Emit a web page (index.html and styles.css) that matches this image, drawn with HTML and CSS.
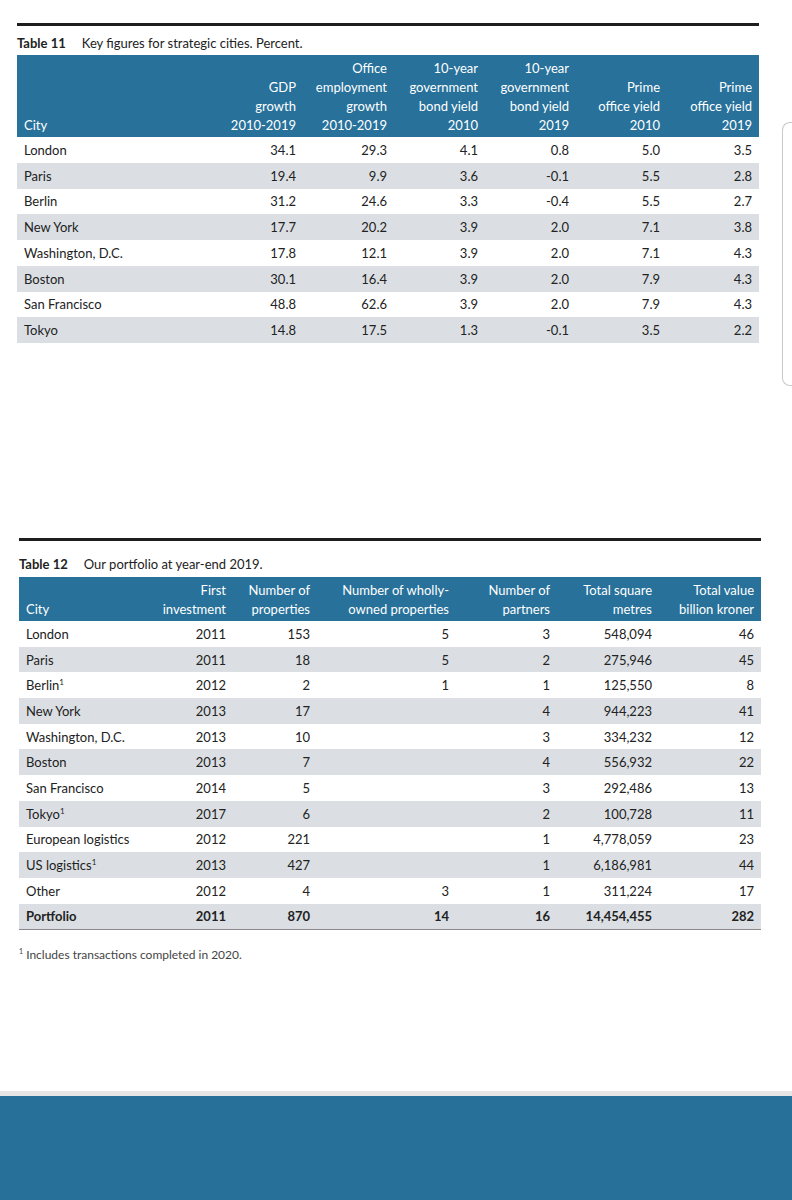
FILE: index.html
```html
<!DOCTYPE html>
<html lang="en">
<head>
<meta charset="utf-8">
<title>Key figures for strategic cities</title>
<link rel="stylesheet" href="styles.css">
</head>
<body>
<div class="page">
  <section class="block block-11">
    <div class="rule"></div>
    <p class="caption"><b>Table 11</b><span>Key figures for strategic cities. Percent.</span></p>
    <table class="data t11">
      <colgroup>
        <col class="c-city"><col class="c-num"><col class="c-num"><col class="c-num"><col class="c-num"><col class="c-num"><col class="c-last">
      </colgroup>
      <thead>
        <tr>
          <th class="l">City</th>
          <th>GDP<br>growth<br>2010-2019</th>
          <th>Office<br>employment<br>growth<br>2010-2019</th>
          <th>10-year<br>government<br>bond yield<br>2010</th>
          <th>10-year<br>government<br>bond yield<br>2019</th>
          <th>Prime<br>office yield<br>2010</th>
          <th>Prime<br>office yield<br>2019</th>
        </tr>
      </thead>
      <tbody>
        <tr><td class="l">London</td><td>34.1</td><td>29.3</td><td>4.1</td><td>0.8</td><td>5.0</td><td>3.5</td></tr>
        <tr><td class="l">Paris</td><td>19.4</td><td>9.9</td><td>3.6</td><td>-0.1</td><td>5.5</td><td>2.8</td></tr>
        <tr><td class="l">Berlin</td><td>31.2</td><td>24.6</td><td>3.3</td><td>-0.4</td><td>5.5</td><td>2.7</td></tr>
        <tr><td class="l">New York</td><td>17.7</td><td>20.2</td><td>3.9</td><td>2.0</td><td>7.1</td><td>3.8</td></tr>
        <tr><td class="l">Washington, D.C.</td><td>17.8</td><td>12.1</td><td>3.9</td><td>2.0</td><td>7.1</td><td>4.3</td></tr>
        <tr><td class="l">Boston</td><td>30.1</td><td>16.4</td><td>3.9</td><td>2.0</td><td>7.9</td><td>4.3</td></tr>
        <tr><td class="l">San Francisco</td><td>48.8</td><td>62.6</td><td>3.9</td><td>2.0</td><td>7.9</td><td>4.3</td></tr>
        <tr><td class="l">Tokyo</td><td>14.8</td><td>17.5</td><td>1.3</td><td>-0.1</td><td>3.5</td><td>2.2</td></tr>
      </tbody>
    </table>
  </section>

  <section class="block block-12">
    <div class="rule"></div>
    <p class="caption"><b>Table 12</b><span>Our portfolio at year-end 2019.</span></p>
    <table class="data t12">
      <colgroup>
        <col class="d-city"><col class="d-first"><col class="d-props"><col class="d-wholly"><col class="d-partners"><col class="d-sqm"><col class="d-value">
      </colgroup>
      <thead>
        <tr>
          <th class="l">City</th>
          <th>First<br>investment</th>
          <th>Number of<br>properties</th>
          <th>Number of wholly-<br>owned properties</th>
          <th>Number of<br>partners</th>
          <th>Total square<br>metres</th>
          <th>Total value<br>billion kroner</th>
        </tr>
      </thead>
      <tbody>
        <tr><td class="l">London</td><td>2011</td><td>153</td><td>5</td><td>3</td><td>548,094</td><td>46</td></tr>
        <tr><td class="l">Paris</td><td>2011</td><td>18</td><td>5</td><td>2</td><td>275,946</td><td>45</td></tr>
        <tr><td class="l">Berlin<sup>1</sup></td><td>2012</td><td>2</td><td>1</td><td>1</td><td>125,550</td><td>8</td></tr>
        <tr><td class="l">New York</td><td>2013</td><td>17</td><td></td><td>4</td><td>944,223</td><td>41</td></tr>
        <tr><td class="l">Washington, D.C.</td><td>2013</td><td>10</td><td></td><td>3</td><td>334,232</td><td>12</td></tr>
        <tr><td class="l">Boston</td><td>2013</td><td>7</td><td></td><td>4</td><td>556,932</td><td>22</td></tr>
        <tr><td class="l">San Francisco</td><td>2014</td><td>5</td><td></td><td>3</td><td>292,486</td><td>13</td></tr>
        <tr><td class="l">Tokyo<sup>1</sup></td><td>2017</td><td>6</td><td></td><td>2</td><td>100,728</td><td>11</td></tr>
        <tr><td class="l">European logistics</td><td>2012</td><td>221</td><td></td><td>1</td><td>4,778,059</td><td>23</td></tr>
        <tr><td class="l">US logistics<sup>1</sup></td><td>2013</td><td>427</td><td></td><td>1</td><td>6,186,981</td><td>44</td></tr>
        <tr><td class="l">Other</td><td>2012</td><td>4</td><td>3</td><td>1</td><td>311,224</td><td>17</td></tr>
        <tr class="total"><td class="l">Portfolio</td><td>2011</td><td>870</td><td>14</td><td>16</td><td>14,454,455</td><td>282</td></tr>
      </tbody>
    </table>
    <p class="footnote"><sup>1</sup> Includes transactions completed in 2020.</p>
  </section>
</div>
<footer class="band"></footer>
<div class="side-tab"></div>
</body>
</html>
```

FILE: styles.css
```css
html, body {
  margin: 0;
  padding: 0;
  background: #ffffff;
  overflow: hidden;
}

body {
  font-family: Lato, "Open Sans", "Liberation Sans", sans-serif;
  font-size: 13px;
  color: #222222;
  width: 792px;
  height: 1200px;
  position: relative;
}

.page {
  height: 1091px;
}

.block {
  width: 742px;
}

.block-11 {
  padding-top: 23px;
  margin-left: 17px;
}

.block-12 {
  padding-top: 195px;
  margin-left: 19px;
}

.rule {
  height: 3px;
  background: #1e1e1e;
}

.caption {
  margin: 0;
  line-height: 18px;
  font-size: 13px;
  color: #222222;
}

.block-11 .caption {
  padding-top: 8px;
  padding-bottom: 3px;
}

.block-12 .caption {
  padding-top: 14px;
  padding-bottom: 4px;
}

.caption b {
  font-weight: 700;
  margin-right: 16px;
}

.data {
  width: 742px;
  border-collapse: collapse;
  table-layout: fixed;
}

.data th,
.data td {
  padding: 0 7px;
  text-align: right;
  white-space: nowrap;
}

.data .l {
  text-align: left;
}

.data thead th {
  background: #27719a;
  color: #ffffff;
  font-weight: 400;
  line-height: 19px;
  vertical-align: bottom;
  padding-top: 4px;
  padding-bottom: 2px;
}

.data tbody td {
  line-height: 18px;
  vertical-align: middle;
}

.t11 tbody td {
  height: 25.75px;
}

.t12 tbody td {
  height: 25.7px;
}

.data tbody tr:nth-child(even) td {
  background: #dbdfe3;
}

.data sup {
  font-size: 8px;
  line-height: 0;
  vertical-align: 5px;
}

.t11 .c-city { width: 195px; }
.t11 .c-num { width: 91px; }
.t11 .c-last { width: 92px; }

.t12 .d-city { width: 130px; }
.t12 .d-first { width: 84px; }
.t12 .d-props { width: 84px; }
.t12 .d-wholly { width: 139px; }
.t12 .d-partners { width: 101px; }
.t12 .d-sqm { width: 102px; }
.t12 .d-value { width: 102px; }

.t12 tbody tr:last-child td {
  border-bottom: 1px solid #8a8a8a;
}

.t12 .total td {
  font-weight: 700;
}

.footnote {
  margin: 17px 0 0;
  font-size: 12px;
  line-height: 16px;
  color: #444444;
}

.footnote sup {
  font-size: 7px;
  line-height: 0;
  vertical-align: 5px;
}

.band {
  height: 104px;
  border-top: 5px solid #e6e6e6;
  background: #27709a;
}

.side-tab {
  position: absolute;
  left: 782px;
  top: 122px;
  width: 12px;
  height: 262px;
  border: 1px solid #c9c9c9;
  border-right: none;
  border-radius: 8px 0 0 8px;
}
```
